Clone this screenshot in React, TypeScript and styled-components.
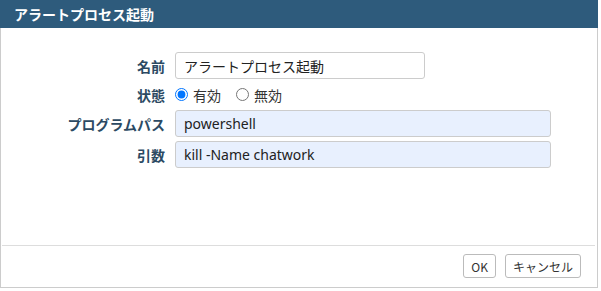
import styled, { createGlobalStyle } from 'styled-components';

const GlobalStyle = createGlobalStyle`
  html, body {
    margin: 0;
    padding: 0;
    background: #ffffff;
  }
  body {
    font-family: "Noto Sans", "Noto Sans CJK JP", sans-serif;
    color: #333333;
  }
`;

const Dialog = styled.section`
  width: 598px;
  height: 288px;
  box-sizing: border-box;
  display: flex;
  flex-direction: column;
  border: 1px solid #cccccc;
  border-top: none;
  background: #ffffff;
`;

const Header = styled.header`
  height: 28px;
  margin: 0 -1px;
  display: flex;
  align-items: center;
  padding: 0 14px;
  background: #2e5b7c;
  color: #ffffff;
  font-size: 14px;
  font-weight: 700;
  font-family: "Noto Sans CJK JP", sans-serif;
`;

const Body = styled.div`
  flex: 1;
  padding-top: 24px;
`;

const Form = styled.div`
  display: grid;
  grid-template-columns: 164px 376px;
  column-gap: 10px;
  row-gap: 4px;
  align-items: center;
`;

const Label = styled.label`
  text-align: right;
  font-size: 14px;
  font-weight: 700;
  color: #2c4a63;
  font-family: "Noto Sans CJK JP", sans-serif;
`;

const TextInput = styled.input<{ $filled?: boolean; $w: number }>`
  box-sizing: border-box;
  width: ${(p) => p.$w}px;
  height: 27px;
  padding: 0 8px;
  border: 1px solid #cccccc;
  border-radius: 3px;
  background: ${(p) => (p.$filled ? '#e8f0fe' : '#ffffff')};
  color: #222222;
  font-size: 14px;
  font-family: "Noto Sans", "Noto Sans CJK JP", sans-serif;
  outline: none;
`;

const RadioGroup = styled.div`
  height: 23px;
  display: flex;
  align-items: center;
  gap: 15px;
`;

const RadioOption = styled.label`
  display: flex;
  align-items: center;
  gap: 5px;
  font-size: 14px;
  color: #333333;
  font-family: "Noto Sans CJK JP", sans-serif;

  input {
    margin: 0;
    width: 13px;
    height: 13px;
    accent-color: #0075ff;
  }
`;

const Footer = styled.footer`
  margin: 0 2px 0 1px;
  border-top: 1px solid #dddddd;
  display: flex;
  justify-content: flex-end;
  gap: 9px;
  padding: 8px 14px 9px 0;
`;

const Button = styled.button`
  height: 24px;
  padding: 0 7px;
  border: 1px solid #bbbbbb;
  border-radius: 3px;
  background: #ffffff;
  color: #333333;
  font-size: 12px;
  font-family: "Noto Sans CJK JP", sans-serif;
`;

export default function App() {
  return (
    <>
      <GlobalStyle />
      <Dialog>
        <Header>アラートプロセス起動</Header>
        <Body>
          <Form>
            <Label>名前</Label>
            <TextInput $w={250} defaultValue="アラートプロセス起動" />
            <Label>状態</Label>
            <RadioGroup>
              <RadioOption>
                <input type="radio" name="state" defaultChecked />
                有効
              </RadioOption>
              <RadioOption>
                <input type="radio" name="state" />
                無効
              </RadioOption>
            </RadioGroup>
            <Label>プログラムパス</Label>
            <TextInput $w={376} $filled defaultValue="powershell" />
            <Label>引数</Label>
            <TextInput $w={376} $filled defaultValue="kill -Name chatwork" />
          </Form>
        </Body>
        <Footer>
          <Button type="button">OK</Button>
          <Button type="button">キャンセル</Button>
        </Footer>
      </Dialog>
    </>
  );
}
